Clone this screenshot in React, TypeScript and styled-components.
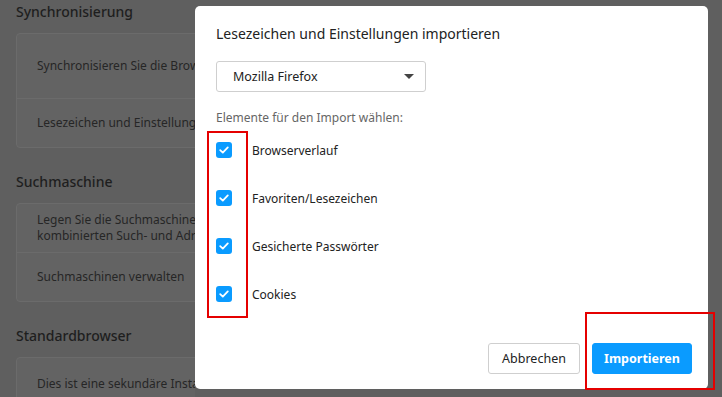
import styled, { createGlobalStyle } from "styled-components";

const Global = createGlobalStyle`
  html, body {
    margin: 0;
    padding: 0;
    background: #5f5f5f;
    font-family: "Noto Sans", "Open Sans", sans-serif;
  }
  * { box-sizing: border-box; }
`;

const Page = styled.div`
  width: 722px;
  height: 397px;
  overflow: hidden;
  position: relative;
  padding: 0 0 0 16px;
`;

// only the part left of the dialog is visible, so the settings column is clipped there
const Settings = styled.div`
  width: 179px;
  overflow: hidden;
`;

const Section = styled.section`
  display: flex;
  flex-direction: column;
  margin-bottom: 22px;
`;

const Heading = styled.h2`
  margin: 0;
  font-size: 14px;
  font-weight: 500;
  color: #1e1e1e;
  line-height: 24px;
  white-space: nowrap;
`;

const Card = styled.div`
  margin-top: 9px;
  width: 680px;
  background: #636363;
  border: 1px solid #6b6b6b;
  border-radius: 4px;
`;

const CardRow = styled.div<{ $h: number }>`
  height: ${(p) => p.$h}px;
  padding: 0 20px;
  display: flex;
  align-items: center;
  font-size: 12px;
  line-height: 16px;
  color: #262626;
  white-space: nowrap;
  & + & {
    border-top: 1px solid #6b6b6b;
  }
`;

const Dialog = styled.div`
  position: absolute;
  left: 195px;
  top: 6px;
  width: 513px;
  height: 383px;
  background: #fff;
  border-radius: 5px;
  padding: 18px 16px 15px 21px;
  display: flex;
  flex-direction: column;
`;

const Title = styled.div`
  font-size: 14px;
  color: #222;
  line-height: 20px;
`;

const Select = styled.div`
  margin-top: 17px;
  width: 210px;
  height: 31px;
  border: 1px solid #cfcfcf;
  border-radius: 3px;
  display: flex;
  align-items: center;
  justify-content: space-between;
  padding: 0 11px 0 16px;
  font-size: 12.5px;
  color: #222;
`;

const Arrow = styled.span`
  width: 0;
  height: 0;
  border-left: 5px solid transparent;
  border-right: 5px solid transparent;
  border-top: 5px solid #444;
`;

const Hint = styled.div`
  margin-top: 18px;
  font-size: 12px;
  color: #666;
  line-height: 16px;
`;

const List = styled.div`
  margin-top: 16px;
  display: flex;
  flex-direction: column;
  gap: 32px;
`;

const Item = styled.label`
  display: flex;
  align-items: center;
  gap: 20px;
  height: 16px;
  font-size: 12px;
  color: #222;
`;

const Box = styled.span`
  width: 16px;
  height: 16px;
  border-radius: 3px;
  background: #0a9bff;
  display: flex;
  align-items: center;
  justify-content: center;
`;

const Footer = styled.div`
  margin-top: auto;
  display: flex;
  justify-content: flex-end;
  gap: 12px;
`;

const Button = styled.button<{ $primary?: boolean; $w: number }>`
  width: ${(p) => p.$w}px;
  height: 31px;
  padding: 0;
  border-radius: 3px;
  font-family: inherit;
  font-size: 12.5px;
  font-weight: ${(p) => (p.$primary ? 700 : 400)};
  color: ${(p) => (p.$primary ? "#fff" : "#222")};
  background: ${(p) => (p.$primary ? "#0a9bff" : "#fff")};
  border: 1px solid ${(p) => (p.$primary ? "#0a9bff" : "#cfcfcf")};
`;

const Mark = styled.div<{ $l: number; $t: number; $w: number; $h: number }>`
  position: absolute;
  left: ${(p) => p.$l}px;
  top: ${(p) => p.$t}px;
  width: ${(p) => p.$w}px;
  height: ${(p) => p.$h}px;
  border: 2px solid #e50000;
`;

const Check = () => (
  <svg width="12" height="12" viewBox="0 0 12 12">
    <path d="M2.2 6.2 L4.8 8.6 L9.8 3.4" fill="none" stroke="#fff" strokeWidth="1.8" strokeLinecap="round" strokeLinejoin="round" />
  </svg>
);

const items = ["Browserverlauf", "Favoriten/Lesezeichen", "Gesicherte Passwörter", "Cookies"];

export default function App() {
  return (
    <>
      <Global />
      <Page>
        <Settings>
          <Section>
            <Heading>Synchronisierung</Heading>
            <Card>
              <CardRow $h={64}>Synchronisieren Sie die Browserdaten über Ihre Geräte hinweg</CardRow>
              <CardRow $h={49}>Lesezeichen und Einstellungen importieren</CardRow>
            </Card>
          </Section>
          <Section>
            <Heading>Suchmaschine</Heading>
            <Card>
              <CardRow $h={48}>
                Legen Sie die Suchmaschine fest, die in der
                <br />
                kombinierten Such- und Adressleiste verwendet wird
              </CardRow>
              <CardRow $h={49}>Suchmaschinen verwalten</CardRow>
            </Card>
          </Section>
          <Section>
            <Heading>Standardbrowser</Heading>
            <Card>
              <CardRow $h={52}>Dies ist eine sekundäre Installation des Browsers</CardRow>
            </Card>
          </Section>
        </Settings>

        <Dialog>
          <Title>Lesezeichen und Einstellungen importieren</Title>
          <Select>
            Mozilla Firefox
            <Arrow />
          </Select>
          <Hint>Elemente für den Import wählen:</Hint>
          <List>
            {items.map((t) => (
              <Item key={t}>
                <Box>
                  <Check />
                </Box>
                {t}
              </Item>
            ))}
          </List>
          <Footer>
            <Button $w={92}>Abbrechen</Button>
            <Button $primary $w={100}>Importieren</Button>
          </Footer>
        </Dialog>
        <Mark $l={207} $t={131} $w={41} $h={187} />
        <Mark $l={585} $t={312} $w={130} $h={78} />
      </Page>
    </>
  );
}
